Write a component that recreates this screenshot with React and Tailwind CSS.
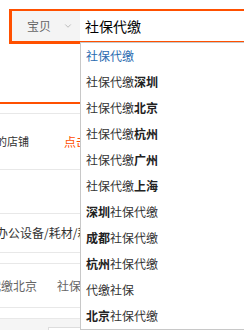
import { ChevronDown } from "lucide-react";

const suggestions = [
  { pre: "社保代缴", bold: "", post: "", active: true },
  { pre: "社保代缴", bold: "深圳", post: "" },
  { pre: "社保代缴", bold: "北京", post: "" },
  { pre: "社保代缴", bold: "杭州", post: "" },
  { pre: "社保代缴", bold: "广州", post: "" },
  { pre: "社保代缴", bold: "上海", post: "" },
  { pre: "", bold: "深圳", post: "社保代缴" },
  { pre: "", bold: "成都", post: "社保代缴" },
  { pre: "", bold: "杭州", post: "社保代缴" },
  { pre: "代缴社保", bold: "", post: "" },
  { pre: "", bold: "北京", post: "社保代缴" },
];

const App = () => {
  return (
    <div
      className="relative w-[244px] h-[330px] overflow-hidden bg-white"
      style={{ fontFamily: '"Noto Sans CJK SC", "Noto Sans", sans-serif' }}
    >
      {/* search bar */}
      <div className="pt-[9px] pl-[9px]">
        <div className="flex h-[35px] border-[#ff5000] border-t-2 border-l-[3px] border-b-[3px]">
          <div className="flex items-center w-[68px] bg-[#f4f4f4] pl-[15px] text-[12px] text-[#666]">
            <span>宝贝</span>
            <ChevronDown className="ml-[12px] w-[10px] h-[10px] text-[#999]" strokeWidth={1.5} />
          </div>
          <div className="flex-1 flex items-center bg-white pl-[5px] text-[14px] text-black">
            社保代缴
          </div>
        </div>
      </div>

      {/* page behind the dropdown */}
      <div className="mt-[58px] h-[2px] bg-[#ff5000]" />
      <div className="mt-[9px] border-t border-[#e8e8e8]" />
      <div className="h-[56px] flex items-center border-b border-[#e8e8e8] text-[11px] whitespace-nowrap">
        <span className="ml-[-4px] text-[#333]">的店铺</span>
        <span className="ml-[35px] text-[12px] text-[#ff5000]">点击查看</span>
      </div>
      <div className="h-[44px] border-b border-[#e8e8e8]" />
      <div className="h-[39px] flex items-center border-b border-[#e8e8e8] text-[12px] text-[#333] whitespace-nowrap">
        <span className="ml-[-4px]">办公设备/耗材/耗材</span>
      </div>
      <div className="h-[11px] border-b border-[#e8e8e8]" />
      <div className="h-[44px] flex items-center border-b border-[#e8e8e8] text-[12px] text-[#666] whitespace-nowrap">
        <span className="ml-[-35px]">社保代缴北京</span>
        <span className="ml-[20px]">社保代缴上海</span>
      </div>
      <div className="h-[11px] border-b border-[#e8e8e8]" />
      <div className="h-[20px] bg-[#f5f5f5] pt-[8px] pl-[48px]">
        <div className="h-[20px] bg-white border border-[#ddd]" />
      </div>

      {/* suggestion dropdown */}
      <div className="absolute left-[80px] top-[42px] w-[200px] bg-white border border-[#c8c8c8]">
        {suggestions.map((s, i) => (
          <div
            key={i}
            className={`h-[26px] flex items-center pl-[5px] text-[12px] ${s.active ? "text-[#2a6bb0]" : "text-[#333]"}`}
          >
            {s.pre}
            {s.bold && <b className="font-bold text-[#222]">{s.bold}</b>}
            {s.post}
          </div>
        ))}
      </div>
    </div>
  );
};

export default App;
